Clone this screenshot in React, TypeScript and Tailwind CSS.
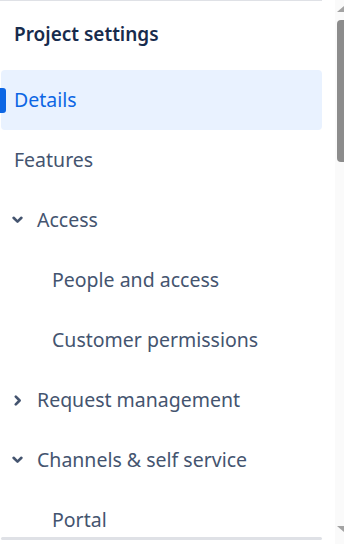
import React from "react";

const ChevronDown = () => (
  <svg width="11" height="8" viewBox="0 0 11 8" className="shrink-0">
    <path d="M1.6 1.8 L5.5 5.6 L9.4 1.8" fill="none" stroke="#44546F" strokeWidth="2.6" strokeLinecap="round" strokeLinejoin="round" />
  </svg>
);

const ChevronRight = () => (
  <svg width="8" height="11" viewBox="0 0 8 11" className="shrink-0">
    <path d="M1.8 1.6 L5.6 5.5 L1.8 9.4" fill="none" stroke="#44546F" strokeWidth="2.6" strokeLinecap="round" strokeLinejoin="round" />
  </svg>
);

type Item = { label: string; level: 0 | 1; icon?: "down" | "right"; active?: boolean };

const items: Item[] = [
  { label: "Details", level: 0, active: true },
  { label: "Features", level: 0 },
  { label: "Access", level: 0, icon: "down" },
  { label: "People and access", level: 1 },
  { label: "Customer permissions", level: 1 },
  { label: "Request management", level: 0, icon: "right" },
  { label: "Channels & self service", level: 0, icon: "down" },
  { label: "Portal", level: 1 },
];

export default function App() {
  return (
    <div
      className="w-[344px] h-[544px] flex bg-white overflow-hidden"
      style={{ fontFamily: '"Noto Sans", "Open Sans", sans-serif' }}
    >
      <div className="w-[335px] shrink-0 flex flex-col">
        <div className="w-[322px] h-px bg-[#dfe1e6]" />
        <div className="h-[69px] flex items-center pl-[14px] pb-[3px] text-[19px] font-semibold text-[#172B4D]">
          Project settings
        </div>
        <div className="flex-1 overflow-hidden w-[322px]">
          {items.map((it) => {
            if (it.active) {
              return (
                <div key={it.label} className="h-[60px] flex items-center">
                  <div className="relative z-10 w-[6px] h-[25px] rounded-r-[3px] bg-[#0C66E4] shrink-0" />
                  <div className="flex-1 h-full -ml-[5px] rounded-[4px] bg-[#E9F2FF] flex items-center pl-[13px] text-[19.5px] text-[#0C66E4]">
                    {it.label}
                  </div>
                </div>
              );
            }
            return (
              <div
                key={it.label}
                className={
                  "h-[60px] flex items-center text-[19.5px] text-[#44546F] " +
                  (it.level === 1 ? "pl-[52px]" : it.icon ? "pl-[12px]" : "pl-[14px]")
                }
              >
                {it.icon === "down" && (
                  <span className="w-[25px] flex items-center">
                    <ChevronDown />
                  </span>
                )}
                {it.icon === "right" && (
                  <span className="w-[25px] flex items-center pl-[2px]">
                    <ChevronRight />
                  </span>
                )}
                <span>{it.label}</span>
              </div>
            );
          })}
        </div>
        <div className="w-[321px] ml-px h-[3px] rounded-full bg-[#dfe1e6]" />
        <div className="h-[4px]" />
      </div>
      <div className="w-[9px] shrink-0 bg-[#fafafa] flex flex-col items-end">
        <div className="h-[6px]" />
        <svg width="7" height="6" viewBox="0 0 7 6">
          <path d="M7 0 L7 6 L0 6 Z" fill="#a3a3a3" />
        </svg>
        <div className="h-[8px]" />
        <div className="w-[7px] h-[142px] bg-[#8c8c8c] rounded-l-[4px]" />
        <div className="flex-1" />
        <svg width="7" height="6" viewBox="0 0 7 6">
          <path d="M0 0 L7 0 L7 6 Z" fill="#a3a3a3" />
        </svg>
        <div className="h-[12px]" />
      </div>
    </div>
  );
}
